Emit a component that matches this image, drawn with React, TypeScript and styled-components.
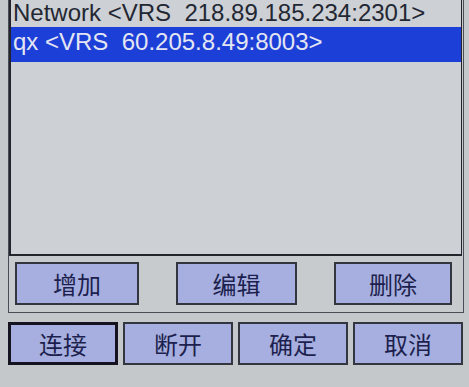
import styled, { createGlobalStyle } from 'styled-components';

const GlobalStyle = createGlobalStyle`
  html, body {
    margin: 0;
    padding: 0;
    background: #c5c8cb;
    overflow: hidden;
  }
  body {
    width: 469px;
    height: 387px;
  }
`;

type Server = { name: string; host: string; port: number };

const servers: Server[] = [
  { name: 'Network', host: '218.89.185.234', port: 2301 },
  { name: 'qx', host: '60.205.8.49', port: 8003 },
];

const SELECTED = 1;

const Screen = styled.div`
  display: flex;
  flex-direction: column;
  width: 469px;
  height: 387px;
  font-family: 'Liberation Sans', 'Noto Sans CJK SC', sans-serif;
`;

const Panel = styled.div`
  display: flex;
  flex-direction: column;
  margin: -5px 5px 0 8px;
  border: 1px solid #4a4d55;
  background: #c8cbce;
`;

const ListBox = styled.div`
  height: 256px;
  margin-right: 1px;
  border: 2px solid #22252c;
  border-right-width: 1px;
  background: #cdd1d6;
  overflow: hidden;
`;

const Row = styled.div<{ $selected: boolean }>`
  height: 29px;
  line-height: 29px;
  padding: 0 0 ${(p) => (p.$selected ? '6px' : '0')} 2px;
  font-size: 24px;
  white-space: pre;
  color: ${(p) => (p.$selected ? '#e3e6f2' : '#232732')};
  background: ${(p) => (p.$selected ? '#1c3fd8' : 'transparent')};
`;

const EditBar = styled.div`
  display: flex;
  justify-content: space-between;
  padding: 6px 11px 7px 6px;
`;

const ActionBar = styled.div`
  display: grid;
  grid-template-columns: repeat(4, 1fr);
  gap: 5px;
  margin: 9px 6px 0 8px;
`;

const Button = styled.button<{ $focused?: boolean; $width?: number }>`
  box-sizing: border-box;
  width: ${(p) => (p.$width ? `${p.$width}px` : 'auto')};
  height: 43px;
  padding: 0;
  border: ${(p) => (p.$focused ? '3px solid #15131f' : '2px solid #33363f')};
  border-radius: 0;
  background: #a6afdf;
  color: #1d1f4e;
  font-family: 'Noto Sans CJK SC', sans-serif;
  font-size: 24px;
  line-height: 1;
`;

export default function App() {
  return (
    <>
      <GlobalStyle />
      <Screen>
        <Panel>
          <ListBox>
            {servers.map((s, i) => (
              <Row key={s.name} $selected={i === SELECTED}>
                {`${s.name} <VRS  ${s.host}:${s.port}>`}
              </Row>
            ))}
          </ListBox>
          <EditBar>
            <Button $width={124}>增加</Button>
            <Button $width={121}>编辑</Button>
            <Button $width={118}>删除</Button>
          </EditBar>
        </Panel>
        <ActionBar>
          <Button $focused>连接</Button>
          <Button>断开</Button>
          <Button>确定</Button>
          <Button>取消</Button>
        </ActionBar>
      </Screen>
    </>
  );
}
